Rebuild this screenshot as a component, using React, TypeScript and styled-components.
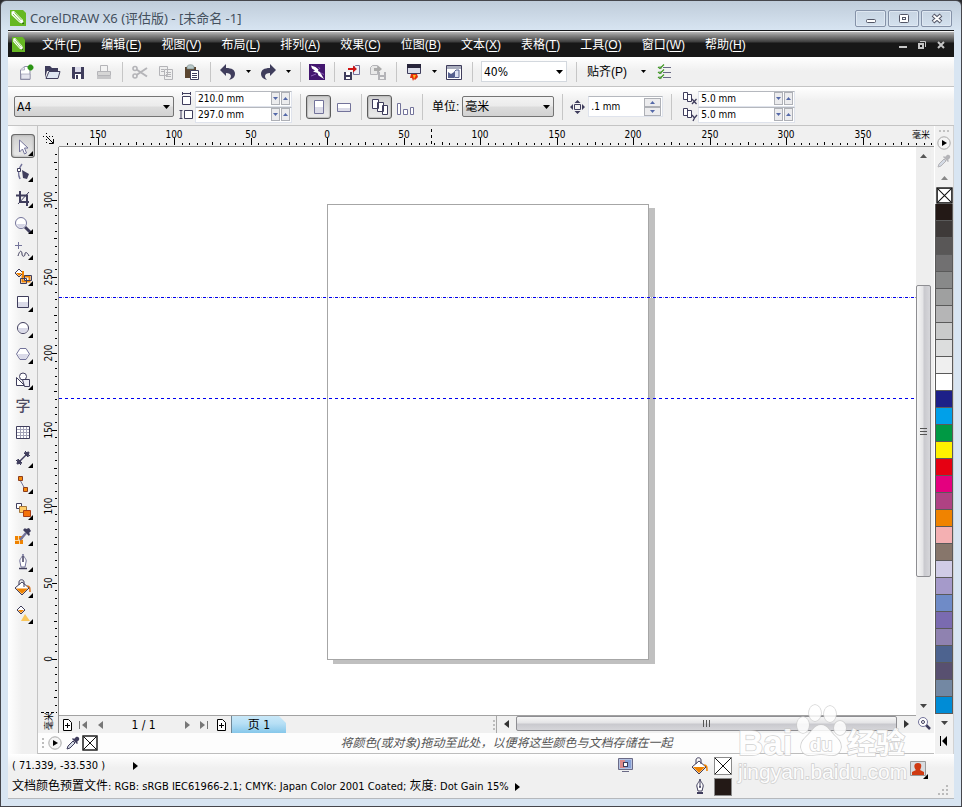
import React from "react";
import styled, { createGlobalStyle, css } from "styled-components";

const UI_FONT = `"DejaVu Sans Condensed", "Noto Sans", "Noto Sans CJK SC", sans-serif`;
const MENU_FONT = `"Liberation Sans", "Noto Sans CJK SC", sans-serif`;
const INK = "#3f3d5c";
const SOFT_INK = "#73739a";
const MUTED = "#b4b4b8";
const GREY = "#777";

const GlobalStyle = createGlobalStyle`
  *, *::before, *::after { box-sizing: border-box; }
  body { margin: 0; background: #2b2b2f; font: 11px/16px ${UI_FONT}; color: #000; }
  button, input, select { font: inherit; color: inherit; margin: 0; padding: 0; border: 0; border-radius: 0; background: none; }
  svg { display: block; flex: none; }
`;

/* ---------- window frame ---------- */

const AppWindow = styled.div`
  position: relative;
  display: flex;
  flex-direction: column;
  min-height: 100vh;
  padding: 0 7px 7px;
  border: 1px solid #45464c;
  border-radius: 6px 6px 0 0;
  background: linear-gradient(#bfccda 0, #d8e5f2 30px, #d8e5f2);
`;

const TitleBar = styled.header`
  display: flex;
  align-items: center;
  gap: 4px;
  height: 29px;
  padding: 5px 2px 0 2px;
  h1 {
    flex: 1;
    margin: 0;
    font: 13px/18px "Noto Sans", "Noto Sans CJK SC", sans-serif;
    color: #44505e;
    white-space: nowrap;
  }
`;

const WindowButtons = styled.div`
  display: flex;
  gap: 2px;
`;

const WindowButton = styled.button`
  display: grid;
  place-items: center;
  width: 31px;
  height: 17px;
  border: 1px solid #8592a8;
  border-radius: 2px;
  box-shadow: inset 0 0 0 1px #dfe8f2;
`;

const Client = styled.div`
  flex: 1;
  display: flex;
  flex-direction: column;
  border-top: 1px solid #15171a;
  border-bottom: 1px solid #b5b8bc;
  background: #f0f0f0;
`;

const MenuBar = styled.nav`
  display: flex;
  align-items: center;
  justify-content: space-between;
  height: 26px;
  padding: 0 6px 0 4px;
  border-top: 1px solid #f4f4f4;
  background: linear-gradient(#b8b8b8 0, #8c8c8c 3px, #3c3c3c 10px, #171717 11px, #171717);
  color: #fff;
  font: 12px/18px ${MENU_FONT};
`;

const Menus = styled.div`
  display: flex;
  gap: 20px;
  flex: 1;
  margin-left: 17px;
`;

const MenuButton = styled.button`
  white-space: nowrap;
  u { text-underline-offset: 2px; }
`;

const DocButtons = styled.div`
  display: flex;
  gap: 5px;
`;

const PlainButton = styled.button<{ $w?: number; $h?: number }>`
  display: grid;
  place-items: center;
  flex: none;
  width: ${(p) => p.$w ?? 14}px;
  height: ${(p) => p.$h ?? 16}px;
`;

/* ---------- bars ---------- */

const barSurface = css`
  display: flex;
  align-items: center;
  border-bottom: 1px solid #c4c4c4;
  background: linear-gradient(#fff, #f0f0f0 14px, #f0f0f0);
`;

const Toolbar = styled.div`
  ${barSurface}
  height: 30px;
  padding-left: 5px;
`;

const PropertyBar = styled.div`
  ${barSurface}
  height: 39px;
  padding: 1px 0 0 6px;
`;

const Divider = styled.span`
  flex: none;
  width: 1px;
  height: 20px;
  margin: 0 4px 0 5px;
  background: #c6c6c6;
`;

const GroupDivider = styled.span<{ $before?: number }>`
  flex: none;
  width: 1px;
  height: 26px;
  margin: 0 5px 0 ${(p) => p.$before ?? 8}px;
  background: #c6c6c6;
`;

const Gap = styled.span`
  flex: none;
  width: 5px;
`;

const TextButton = styled.button`
  padding: 0 6px;
  font: 12px/18px ${MENU_FONT};
  white-space: nowrap;
`;

const ToggleButton = styled.button<{ $on?: boolean }>`
  display: grid;
  place-items: center;
  flex: none;
  width: 25px;
  height: 24px;
  border-radius: 3px;
  ${(p) =>
    p.$on &&
    css`
      border: 1px solid #5d5d5d;
      background: linear-gradient(#cfcfcf, #ededed);
      box-shadow: inset 0 0 1px 1px #bdbdbd;
    `}
`;

const SelectBox = styled.span<{ $w: number; $flat?: boolean }>`
  display: grid;
  align-items: center;
  flex: none;
  width: ${(p) => p.$w}px;
  margin: 0 ${(p) => (p.$flat ? 4 : 0)}px;
  select {
    grid-area: 1 / 1;
    appearance: none;
    width: 100%;
    height: 21px;
    padding: 0 20px 0 2px;
    border: 1px solid ${(p) => (p.$flat ? "#d3d8de" : "#747474")};
    border-radius: ${(p) => (p.$flat ? 0 : 2)}px;
    background: ${(p) => (p.$flat ? "#fff" : "linear-gradient(#f3f3f3, #ebebeb 48%, #dcdcdc 52%, #d2d2d2)")};
    font-size: 12px;
  }
  svg {
    grid-area: 1 / 1;
    justify-self: end;
    margin-right: 4px;
    pointer-events: none;
  }
`;

const UnitLabel = styled.label`
  margin: 0 3px 0 4px;
  font: 12px/18px ${MENU_FONT};
`;

const FieldGroup = styled.div`
  display: grid;
  grid-template-columns: 16px 97px;
  grid-auto-rows: 16px;
  align-items: center;
`;

const Field = styled.span<{ $w?: number; $h?: number }>`
  display: flex;
  align-items: center;
  gap: 1px;
  width: ${(p) => p.$w ?? 97}px;
  height: ${(p) => p.$h ?? 16}px;
  padding-right: 1px;
  border: 1px solid #dfe3ec;
  border-top-color: #b5b8be;
  background: #fff;
  input {
    flex: 1;
    min-width: 0;
    padding-left: 2px;
    font-size: 10px;
    line-height: 14px;
    outline: 0;
  }
`;

const SpinButton = styled.button<{ $wide?: boolean }>`
  display: grid;
  place-items: center;
  width: ${(p) => (p.$wide ? 17 : 9)}px;
  height: ${(p) => (p.$wide ? 9 : 13)}px;
  border: 1px solid #aeb0b6;
  background: #ececee;
`;

const SpinStack = styled.span`
  display: flex;
  flex-direction: column;
`;

/* ---------- workspace ---------- */

const Workspace = styled.div`
  flex: 1;
  display: flex;
  min-height: 0;
`;

const Toolbox = styled.aside`
  width: 30px;
  padding: 8px 2px 0 3px;
  border-right: 1px solid #c3c3c3;
  background: linear-gradient(90deg, #fff, #f0f0f0 14px, #f0f0f0);
`;

const ToolItem = styled.button<{ $on?: boolean }>`
  display: block;
  width: 24px;
  height: 24px;
  margin-bottom: 2px;
  ${(p) =>
    p.$on &&
    css`
      border-radius: 4px;
      background: linear-gradient(#cdcdcd, #ececec);
      box-shadow: inset 0 0 0 1px #6a6a6a, inset 0 0 2px 2px #bcbcbc;
    `}
`;

const CenterColumn = styled.div`
  flex: 1;
  display: flex;
  flex-direction: column;
  min-width: 0;
`;

const DrawingGrid = styled.div`
  flex: 1;
  display: grid;
  grid-template-columns: 21px 1fr 18px;
  grid-template-rows: 21px 1fr 18px;
  min-height: 0;
`;

const RulerCorner = styled.div`
  display: grid;
  place-items: center;
  padding-top: 4px;
`;

const HRuler = styled.div`
  grid-column: 2 / 4;
  overflow: hidden;
  border-bottom: 1px solid #8f8f8f;
`;

const VRuler = styled.div`
  grid-row: 2 / 4;
  overflow: hidden;
  border-right: 1px solid #8f8f8f;
`;

const RulerDrawing = styled.svg`
  width: 100%;
  height: 100%;
  font-size: 10px;
  shape-rendering: crispEdges;
`;

const Canvas = styled.main`
  position: relative;
  overflow: hidden;
  background: #fff;
`;

const Page = styled.div`
  position: absolute;
  left: 268px;
  top: 57px;
  width: 322px;
  height: 456px;
  border: 1px solid #a6a6a6;
  background: #fff;
  box-shadow: 6px 4px 0 #c0c0c0;
`;

const Guide = styled.div<{ $y: number; $active?: boolean }>`
  position: absolute;
  left: 0;
  right: 0;
  top: ${(p) => p.$y}px;
  height: 1px;
  background: repeating-linear-gradient(
    90deg,
    #0000f0 0 3px,
    ${(p) => (p.$active ? "#fff 3px 4px, #9a9aae 4px 5px, #fff 5px 6px" : "transparent 3px 6px")}
  );
`;

const VScroll = styled.div`
  display: flex;
  flex-direction: column;
  align-items: center;
  width: 15px;
  background: #eeeeee;
`;

const thumb = css`
  display: grid;
  place-items: center;
  border: 1px solid #8e8e92;
  border-radius: 2px;
`;

const Track = styled.span<{ $grow: number }>`
  flex: ${(p) => p.$grow} 1 0;
`;

const VThumb = styled.button`
  ${thumb}
  flex: 73 1 0;
  width: 15px;
  background: linear-gradient(90deg, #f6f6f6, #e4e4e6 45%, #c9c9ce 55%, #d6d6da);
`;

const PageBar = styled.div`
  grid-column: 2;
  display: grid;
  grid-template-columns: 22fr 21fr;
  border-top: 1px solid #a2a2a2;
  height: 18px;
`;

const PageTabs = styled.div`
  display: flex;
  align-items: center;
  border-right: 1px solid #a8a8a8;
`;

const PageCount = styled.span`
  width: 69px;
  font-size: 12px;
  text-align: center;
`;

const PageTab = styled.button`
  width: 55px;
  height: 17px;
  margin: 0 auto 0 1px;
  border-left: 1px solid #6f8797;
  background: linear-gradient(#c9e8f8, #b6dff5 45%, #86c7ea);
  clip-path: polygon(0 0, 48px 0, 100% 7px, 100% 100%, 0 100%);
  font-size: 12px;
  line-height: 16px;
`;

const HScroll = styled.div`
  display: flex;
  align-items: flex-start;
`;

const HThumb = styled.button`
  ${thumb}
  flex: 1;
  height: 15px;
  background: linear-gradient(#f6f6f6, #e4e4e6 45%, #c9c9ce 55%, #d6d6da);
`;

const DocumentPalette = styled.div`
  display: flex;
  align-items: center;
  height: 21px;
  padding: 0 20px 0 3px;
  border-bottom: 1px solid #bdbdbd;
  background: #fdfdfd;
  em {
    flex: 1;
    color: #555;
    font: italic 12px/16px ${MENU_FONT};
    text-align: center;
    white-space: nowrap;
  }
`;

const ColorPalette = styled.aside`
  display: flex;
  flex-direction: column;
  align-items: center;
  width: 20px;
  padding-top: 3px;
  border-left: 1px solid #fff;
  border-right: 1px solid #d2d2d2;
  background: #f1f1f1;
`;

const Swatch = styled.button<{ $color: string }>`
  width: 18px;
  height: 17px;
  border: solid #5a5a5a;
  border-width: 0 1px 1px;
  background: ${(p) => p.$color};
`;

/* ---------- status bar ---------- */

const StatusBar = styled.footer`
  display: flex;
  height: 44px;
  background: linear-gradient(#fff, #f0f0f0 14px, #f0f0f0);
`;

const StatusText = styled.div`
  flex: 1;
  min-width: 0;
  padding: 1px 55px 0 4px;
`;

const StatusRow = styled.div`
  display: flex;
  align-items: center;
  height: 21px;
  gap: 6px;
  white-space: nowrap;
`;

const Han = styled.span`
  font-size: 12px;
`;

const Spacer = styled.span`
  flex: 1;
`;

const FillOutline = styled.div`
  display: grid;
  grid-template-columns: 20px 19px;
  grid-auto-rows: 21px;
  align-items: center;
  gap: 0 3px;
  width: 217px;
  padding: 1px 0 0 3px;
`;

const ColorChip = styled.span<{ $color: string }>`
  display: block;
  width: 18px;
  height: 18px;
  border: 1px solid #8b8b8b;
  background: ${(p) => p.$color};
`;

const StatusEnd = styled.div`
  display: flex;
  width: 49px;
  padding: 6px 0 0 4px;
`;

const ResizeGrip = styled.svg`
  align-self: flex-end;
  margin: 0 0 2px 8px;
`;

const Watermark = styled.svg`
  position: absolute;
  right: 49px;
  bottom: 16px;
  pointer-events: none;
  opacity: 0.85;
`;

/* ---------- drawings ---------- */

type DrawProps = { w?: number; h?: number; top?: number; children: React.ReactNode };

const Draw = ({ w = 20, h = 20, top = 0, children }: DrawProps) => (
  <svg width={w} height={h} viewBox={`0 ${top} ${w} ${h}`} fill="none" aria-hidden="true">
    {children}
  </svg>
);

const Caret = ({ color = "#000" }: { color?: string }) => (
  <Draw w={7} h={4}><path d="M0 0h7L3.500 4z" fill={color} /></Draw>
);

const CaretUp = ({ color = "#555" }: { color?: string }) => (
  <Draw w={7} h={4}><path d="M0 4h7L3.500 0z" fill={color} /></Draw>
);

const SmallDown = () => (
  <Draw w={5} h={3}><path d="M0 0h5L2.500 3z" fill="#5468a8" /></Draw>
);

const SmallUp = () => (
  <Draw w={5} h={3}><path d="M0 3h5L2.500 0z" fill="#5468a8" /></Draw>
);

const Side = ({ left = false, color = "#000" }: { left?: boolean; color?: string }) => (
  <Draw w={5} h={8}><path d={left ? "M5 0v8L0 4z" : "M0 0v8l5-4z"} fill={color} /></Draw>
);

const CorelMark = ({ w, h }: { w: number; h: number }) => (
  <svg width={w} height={h} viewBox="0 0 16 16" preserveAspectRatio="none" aria-hidden="true">
    <path d="M0 0h13l3 3v13H0z" fill="#66b822" />
    <path d="M1.500 1.500L4 1l8.500 8.500 2 5-5-2L1.500 5z" fill="#fff" />
    <path d="M3 4l7 7.500M4.500 2.500l7 7.500" stroke="#66b822" strokeWidth=".8" />
    <path d="M14.500 14.500l-3-.8 2-2z" fill="#2d6d0c" />
  </svg>
);

const NoColor = ({ size = 16 }: { size?: number }) => (
  <svg width={size} height={size} viewBox="0 0 16 16" aria-hidden="true">
    <rect x="1" y="1" width="14" height="14" fill="#fff" stroke="#111" strokeWidth="1.400" />
    <path d="M2 2l12 12M14 2L2 14" stroke="#111" />
  </svg>
);

const Dropper = ({ color = INK }: { color?: string }) => (
  <Draw w={14} h={14}>
    <path d="M1 13l1-3 5-5 2 2-5 5z" fill="#d4dae4" stroke={color} />
    <path d="M6 3l5 5 1-1-1-1 2-2c1-2-1-4-3-3L8 3 7 2z" fill={color} />
  </Draw>
);

const Flyout = () => (
  <Draw w={14} h={14}>
    <circle cx="7" cy="7" r="6.200" fill="#f4f4f4" stroke="#a8a8a8" />
    <path d="M5 4v6l5-3z" fill="#000" />
  </Draw>
);

const Bucket = () => (
  <Draw w={18} h={18}>
    <path d="M8 4l7 6-7 7-7-7z" fill="#fff" stroke={INK} />
    <path d="M2 10h12l-6 6z" fill="#ef8200" />
    <path d="M5 7V3c0-3 5-3 5 0v4" stroke={INK} />
    <path d="M13 8c3 0 3 2 3 6" stroke="#ef8200" strokeWidth="1.500" />
  </Draw>
);

const Nib = () => (
  <Draw w={18} h={18}>
    <path d="M9 1c1 4 4 5 3 8l-1 4H7L6 9C5 6 8 5 9 1z" fill="#fff" stroke={INK} />
    <path d="M9 2v7" stroke={INK} />
    <circle cx="9" cy="9" r="1" fill={INK} />
    <path d="M6 14h6v2H6z" fill={INK} />
  </Draw>
);

const toolbarIcons = {
  fresh: (
    <Draw>
      <path d="M4.500 17.500V8l4-3.500h5.500v13z" fill="#fff" stroke="#8d8da6" />
      <path d="M4.500 8h4V5M5 12h9v5H5z" fill="#e4e4ee" stroke="#8d8da6" strokeWidth=".6" />
      <path d="M14.500 2.500v6M11.500 5.500h6M12.500 3.500l4 4M16.500 3.500l-4 4" stroke="#2b9415" strokeWidth="2" />
    </Draw>
  ),
  open: (
    <Draw>
      <path d="M3 16V4h5l2 2h6v3H5z" fill={INK} />
      <path d="M4 16.500l3-7h11l-2 7z" fill="#dfe6f2" stroke={INK} />
    </Draw>
  ),
  save: (
    <Draw>
      <path d="M4 5h12v12H5l-1-1z" fill={INK} />
      <path d="M7 5h6v5H7z" fill="#dcdcea" />
      <path d="M7 12h6v5H7z" fill="#fff" />
      <path d="M8 13h2v4H8z" fill={INK} />
    </Draw>
  ),
  print: (
    <Draw>
      <path d="M6.500 10V3.500h7V10" fill="#f3f3f3" stroke={MUTED} />
      <path d="M3.500 9.500h13v4h-13z" fill="#d6d6d6" stroke={MUTED} />
      <path d="M3 14h14v3H3z" fill="#c6c6c8" />
    </Draw>
  ),
  cut: (
    <Draw>
      <circle cx="5" cy="6.500" r="2" stroke={MUTED} strokeWidth="1.600" />
      <circle cx="5" cy="14" r="2" stroke={MUTED} strokeWidth="1.600" />
      <path d="M6.500 7.500L17 14.500M6.500 13L17 6" stroke={MUTED} strokeWidth="2" />
    </Draw>
  ),
  copy: (
    <Draw>
      <path d="M3.500 4.500h8v9h-8zM8.500 7.500h8v10h-8z" fill="#efefef" stroke={MUTED} />
      <path d="M5 7.500h3M5 9.500h3M10 10.500h5M10 12.500h5M10 14.500h5" stroke={MUTED} />
    </Draw>
  ),
  paste: (
    <Draw>
      <path d="M3 5h11v11H3z" fill="#5b4630" />
      <path d="M5 5c0-3 7-3 7 0v2H5z" fill="#b9c9c9" stroke="#6e8080" strokeWidth=".6" />
      <path d="M8.500 8.500h8v9h-8z" fill="#fff" stroke={INK} />
      <path d="M10 11.500h5M10 13.500h5M10 15.500h5" stroke={INK} />
    </Draw>
  ),
  undo: (
    <Draw>
      <path d="M2 8l6-6v4c6 0 9 2 9 6 0 3-2 5-6 6 3-3 3-7-3-7v3z" fill={INK} />
    </Draw>
  ),
  redo: (
    <Draw>
      <path d="M18 8l-6-6v4c-6 0-9 2-9 6 0 3 2 5 6 6-3-3-3-7 3-7v3z" fill={INK} />
    </Draw>
  ),
  connect: (
    <Draw>
      <path d="M2 2h16v16H2z" fill="#43166f" />
      <path d="M4 3.500l4.500 1.500 3 2.500L11 9l2 1 4 7-5.500-3.500-1-2.500L6 9.500l2-1-3-2z" fill="#fff" />
      <path d="M11.500 5l1.500 2M13 10.500l4 2M4 14l5-2" stroke="#8a5cb4" />
    </Draw>
  ),
  importFile: (
    <Draw>
      <path d="M2 10h8v8H2z" fill={INK} />
      <path d="M4 10h4v3H4zM4 15h4v2H4z" fill="#fff" />
      <path d="M11.500 12.500v-7l2-2h4v9z" fill="#eef0f8" stroke={SOFT_INK} />
      <path d="M6 9V6h5V3.500L15 7l-4 3.500V8H6z" fill="#cf1313" />
    </Draw>
  ),
  exportFile: (
    <Draw>
      <path d="M2.500 12.500v-7l2-2h5v9z" fill="#e8e8e8" stroke={MUTED} />
      <path d="M10 10h8v8h-8z" fill={MUTED} />
      <path d="M12 10h4v3h-4zM12 15h4v2h-4z" fill="#efefef" />
      <path d="M6 9V6h4V3.500L14 7l-4 3.500V9z" fill="#aaa" />
    </Draw>
  ),
  launch: (
    <Draw>
      <path d="M3.500 3.500h13v8h-13z" fill="#d9dce8" stroke={INK} />
      <path d="M3 2h14v4H3z" fill="#26243a" />
      <path d="M7 12h6l1 3-3 3-1-1-1 2-1-3-2 0z" fill="#e2300d" />
      <path d="M9 13h3l-2 4z" fill="#ffbf1f" />
    </Draw>
  ),
  welcome: (
    <Draw>
      <path d="M2.500 3.500h15v14h-15z" fill="#fff" stroke={INK} />
      <path d="M3 4h14v3H3z" fill="#a9adbd" />
      <path d="M4 10l3 2 3-2v6H4z" fill="#56608f" />
      <path d="M10.500 15.500V9.500l1.500-1.500h3v7.500z" fill="#dfe4f4" stroke="#56608f" />
    </Draw>
  ),
  options: (
    <Draw>
      <path d="M9 5.500h8M9 10.500h8M9 15.500h8" stroke="#6a6a86" />
      <path d="M5 4h3v3H5zM5 9h3v3H5zM5 14h3v3H5z" fill="#bcc4bc" />
      <path d="M4 5l2 1.500L10 2.500M4 10l2 1.500 4-4M4 15l2 1.500 4-4" stroke="#3f9a22" strokeWidth="1.200" />
    </Draw>
  ),
};

const FlyoutCorner = () => <path d="M22 17v5h-5z" fill="#000" />;

const tools: { name: string; art: React.ReactNode; flyout?: boolean }[] = [
  { name: "选择", flyout: true, art: <path d="M8.500 6v12l3-3 2 5 2-1-2-5h3.500z" fill="#fff" stroke={SOFT_INK} /> },
  {
    name: "形状",
    flyout: true,
    art: (
      <>
        <path d="M11 4c-4 5-4 11-2 15" stroke={SOFT_INK} strokeWidth="1.500" />
        <path d="M6.500 8.500h3v3h-3z" fill="#fff" stroke={INK} />
        <path d="M11 10l7 4-2 5-4-1z" fill={INK} />
      </>
    ),
  },
  {
    name: "裁剪",
    flyout: true,
    art: (
      <>
        <path d="M5 9.500h11V20M9 5v11h9" stroke={INK} strokeWidth="2" />
        <path d="M7 18L18 6" stroke={INK} />
      </>
    ),
  },
  {
    name: "缩放",
    flyout: true,
    art: (
      <>
        <path d="M14 15l6 6" stroke={INK} strokeWidth="3" />
        <circle cx="10" cy="11" r="5.500" fill="#fff" stroke={SOFT_INK} />
        <path d="M6 12h8c-1 5-7 5-8 0z" fill="#d5d5e5" />
      </>
    ),
  },
  {
    name: "手绘",
    flyout: true,
    art: (
      <>
        <path d="M7.500 4v7M4 7.500h7" stroke={SOFT_INK} />
        <path d="M7 18c2-7 4-5 4-2s3 3 3 0 3-1 4 2" stroke={INK} />
      </>
    ),
  },
  {
    name: "智能填充",
    flyout: true,
    art: (
      <>
        <path d="M8 5l4 4-4 4-4-4z" fill="#fff" stroke={INK} />
        <path d="M5 9h6l-3 3z" fill="#ef8200" />
        <path d="M11.500 12.500h7v5h-7z" stroke="#ef8200" strokeWidth="2" />
        <path d="M12 7v6" stroke="#ef8200" strokeWidth="2" />
        <path d="M9.500 14.500h6v5h-6zM13.500 11.500h7v5h-7z" stroke={INK} />
      </>
    ),
  },
  {
    name: "矩形",
    flyout: true,
    art: (
      <>
        <path d="M6.500 6.500h11v11h-11z" fill="#fff" stroke={INK} />
        <path d="M7 12h10v5H7z" fill="#dadae8" />
      </>
    ),
  },
  {
    name: "椭圆形",
    flyout: true,
    art: (
      <>
        <circle cx="12" cy="12" r="5.500" fill="#fff" stroke={INK} />
        <path d="M7 12h10c0 6.500-10 6.500-10 0z" fill="#dadae8" />
      </>
    ),
  },
  {
    name: "多边形",
    flyout: true,
    art: (
      <>
        <path d="M9 6.500h6l3.500 5.500-3.500 5.500H9L5.500 12z" fill="#fff" stroke={SOFT_INK} />
        <path d="M6.500 12h11l-3 5H9.500z" fill="#dadae8" />
      </>
    ),
  },
  {
    name: "基本形状",
    flyout: true,
    art: (
      <>
        <circle cx="12" cy="8.500" r="3.500" fill="#fff" stroke={INK} />
        <path d="M5.500 9.500v8h8z" fill="#fff" stroke={INK} />
        <path d="M11.500 11.500h7v7h-5z" fill="#ececf4" stroke={INK} />
      </>
    ),
  },
  {
    name: "文本",
    art: (
      <text x="12" y="17" textAnchor="middle" fontSize="15" fontWeight="500" fill="#4e4c62" fontFamily="Noto Sans CJK SC, sans-serif">
        字
      </text>
    ),
  },
  {
    name: "表格",
    art: (
      <>
        <path d="M5.500 6.500h13v12h-13z" fill="#fff" stroke={INK} />
        <path d="M6 9.500h12M6 12.500h12M6 15.500h12M9.500 7v11M12.500 7v11M15.500 7v11" stroke="#a3a3b8" />
      </>
    ),
  },
  {
    name: "平行度量",
    flyout: true,
    art: (
      <>
        <path d="M7 17L17 7" stroke={INK} strokeWidth="1.500" />
        <path d="M5 14l5 5M14 5l5 5M6 18l1-5 4 4zM18 6l-1 5-4-4z" fill={INK} stroke={INK} />
      </>
    ),
  },
  {
    name: "直线连接器",
    flyout: true,
    art: (
      <>
        <path d="M9 8l5 9" stroke={SOFT_INK} />
        <path d="M7.500 4.500h4v4h-4zM12.500 15.500h4v4h-4z" fill="#f58a0c" stroke="#8c3d1c" />
      </>
    ),
  },
  {
    name: "调和",
    flyout: true,
    art: (
      <>
        <path d="M5.500 5.500h5v5h-5z" fill="#fff" stroke={INK} />
        <path d="M8.500 8.500h7v6h-7z" fill="#ffcf6b" stroke="#a5763b" />
        <path d="M12.500 12.500h7v6h-7z" fill="#f4720b" stroke="#a83d16" />
      </>
    ),
  },
  {
    name: "颜色滴管",
    flyout: true,
    art: (
      <>
        <path d="M4 12h8v8H4z" fill="#ef8200" />
        <path d="M7 12h1v3h4v1H9v4H8v-3H4v-1h3z" fill="#ffd9a0" />
        <path d="M9 16l6-7" stroke={SOFT_INK} strokeWidth="2.500" />
        <path d="M12 6l6 6 1-2-1-1 2-2-2-3-3 1-1-1z" fill={INK} />
      </>
    ),
  },
  {
    name: "轮廓笔",
    flyout: true,
    art: (
      <>
        <path d="M12 4c1 4 4 5 3 8l-1 5h-4l-1-5c-1-3 2-4 3-8z" fill="#fff" stroke={SOFT_INK} />
        <path d="M12 6v6M8 18.500h8" stroke={INK} strokeWidth="1.500" />
      </>
    ),
  },
  {
    name: "填充",
    flyout: true,
    art: (
      <>
        <path d="M11 6l7 6-7 7-7-7z" fill="#fff" stroke={INK} />
        <path d="M5 12.500h12L11 18z" fill="#ef8200" />
        <path d="M8 9V6c0-3 5-3 5 0v5" stroke={INK} />
        <path d="M16 10c3 0 3 2 3 6" stroke="#d9731c" strokeWidth="1.500" />
      </>
    ),
  },
  {
    name: "交互式填充",
    flyout: true,
    art: (
      <>
        <path d="M10 4l4 4-4 4-4-4z" fill="#fff" stroke={INK} />
        <path d="M7 8h6l-3 3z" fill="#ef8200" />
        <path d="M14 12l5 7h-9z" fill="#f9c65a" />
      </>
    ),
  },
];

/* ---------- rulers ---------- */

const SCALE = 1.53;
const steps = (from: number, to: number) =>
  Array.from({ length: (to - from) / 5 + 1 }, (_, i) => from + i * 5);
const tickLength = (v: number) => (v % 50 === 0 ? 7 : v % 25 === 0 ? 3 : 2);

const HorizontalRuler = () => (
  <HRuler>
    <RulerDrawing role="img" aria-label="水平标尺">
      {steps(-170, 395).map((v) => {
        const x = Math.round(268 + v * SCALE);
        const len = tickLength(v);
        return (
          <g key={v}>
            <rect x={x} y={19 - len} width="1" height={len} />
            {v % 50 === 0 && <text x={x} y="12" textAnchor="middle">{Math.abs(v)}</text>}
          </g>
        );
      })}
      <path d="M372.500 3v16" stroke="#000" strokeDasharray="3 3" />
      <text x="853" y="12" fontSize="9">毫米</text>
    </RulerDrawing>
  </HRuler>
);

const VerticalRuler = () => (
  <VRuler>
    <RulerDrawing role="img" aria-label="垂直标尺">
      {steps(-30, 330).map((v) => {
        const y = Math.round(512 - v * SCALE);
        const len = v % 50 === 0 ? 5 : tickLength(v);
        return (
          <g key={v}>
            <rect x={19 - len} y={y} width={len} height="1" />
            {v % 50 === 0 && (
              <text transform={`translate(14 ${y}) rotate(-90)`} textAnchor="middle">{v}</text>
            )}
          </g>
        );
      })}
      <path d="M3 565.500h16" stroke="#000" strokeDasharray="3 2" />
      <text transform="translate(14 583) rotate(-90)" fontSize="9">毫米</text>
    </RulerDrawing>
  </VRuler>
);

/* ---------- data ---------- */

const menus: [string, string][] = [
  ["文件", "F"], ["编辑", "E"], ["视图", "V"], ["布局", "L"], ["排列", "A"], ["效果", "C"],
  ["位图", "B"], ["文本", "X"], ["表格", "T"], ["工具", "O"], ["窗口", "W"], ["帮助", "H"],
];

const swatches = [
  "#231916", "#3e3a39", "#595757", "#717071", "#888989", "#9fa0a0", "#b5b5b6", "#c9caca", "#dcdddd", "#efefef",
  "#ffffff", "#1d2088", "#00a0e9", "#009944", "#fff100", "#e60012", "#e4007f", "#af4283", "#f08300", "#f4b0b2",
  "#87766b", "#d0cce6", "#a59aca", "#6f8bc7", "#7a6bb0", "#8f82b0", "#4d638f", "#585070", "#7388a3", "#008cd6",
];

const ToolbarButton = ({ label, icon, w = 26 }: { label: string; icon: React.ReactNode; w?: number }) => (
  <PlainButton $w={w} $h={24} aria-label={label}>{icon}</PlainButton>
);

const DropButton = ({ label, w = 14 }: { label: string; w?: number }) => (
  <PlainButton $w={w} $h={24} aria-label={label}>
    <Draw w={5} h={3}><path d="M0 0h5L2.500 3z" fill="#000" /></Draw>
  </PlainButton>
);

const NumberField = ({ label, value }: { label: string; value: string }) => (
  <Field>
    <input aria-label={label} defaultValue={value} />
    <SpinButton aria-label={`减小${label}`}><SmallDown /></SpinButton>
    <SpinButton aria-label={`增大${label}`}><SmallUp /></SpinButton>
  </Field>
);

const Duplicate = ({ axis }: { axis: "x" | "y" }) => (
  <Draw w={16} h={15}>
    <path d="M1.500 1.500h4v7h-4zM5.500 3.500h4v7h-4z" fill="#fff" stroke={INK} />
    <path
      d={axis === "x" ? "M10 8l4.500 5M14.500 8l-4.500 5" : "M10 8l2.500 3L15 8M12.500 11l-1.500 3"}
      stroke={INK}
      strokeWidth="1.300"
    />
  </Draw>
);

const AddPage = () => (
  <Draw w={11} h={13}>
    <path d="M1.500 1.500h5l3 3v8h-8z" fill="#fff" stroke="#000" />
    <path d="M5.500 5v5M3 7.500h5" stroke="#000" />
  </Draw>
);

const Grip = () => (
  <Draw w={4} h={12}>
    <path d="M1 1h2v2H1zM1 5h2v2H1zM1 9h2v2H1z" fill="#bdbdbd" />
  </Draw>
);

export default function App() {
  return (
    <>
      <GlobalStyle />
      <AppWindow>
        <TitleBar>
          <CorelMark w={16} h={16} />
          <h1>CorelDRAW X6 (评估版) - [未命名 -1]</h1>
          <WindowButtons>
            <WindowButton aria-label="最小化">
              <Draw w={12} h={11}><rect x="1.500" y="6.500" width="9" height="3" rx="1" fill="#fff" stroke="#535666" /></Draw>
            </WindowButton>
            <WindowButton aria-label="最大化">
              <Draw w={12} h={11}>
                <rect x="1.500" y="1.500" width="9" height="8" rx="1" fill="#fff" stroke="#535666" />
                <rect x="4.500" y="4.500" width="3" height="2" stroke="#535666" />
              </Draw>
            </WindowButton>
            <WindowButton aria-label="关闭">
              <Draw w={12} h={11}>
                <path d="M2 2l8 7M10 2L2 9" stroke="#535666" strokeWidth="4" />
                <path d="M2.500 2.500l7 6M9.500 2.500l-7 6" stroke="#fff" strokeWidth="1.800" />
              </Draw>
            </WindowButton>
          </WindowButtons>
        </TitleBar>

        <Client>
          <MenuBar>
            <CorelMark w={13} h={15} />
            <Menus>
              {menus.map(([label, key]) => (
                <MenuButton key={key}>{label}(<u>{key}</u>)</MenuButton>
              ))}
            </Menus>
            <DocButtons>
              <PlainButton aria-label="最小化文档">
                <Draw w={10} h={10}><path d="M1 6h8v2H1z" fill="#c6c6c6" /></Draw>
              </PlainButton>
              <PlainButton aria-label="还原文档">
                <Draw w={10} h={10}>
                  <path d="M3 1.500h5.500V7" stroke="#c6c6c6" />
                  <path d="M2 4h4v4H2z" stroke="#c6c6c6" strokeWidth="2" />
                </Draw>
              </PlainButton>
              <PlainButton aria-label="关闭文档">
                <Draw w={10} h={10}><path d="M2 2l6 6M8 2L2 8" stroke="#c6c6c6" strokeWidth="2" /></Draw>
              </PlainButton>
            </DocButtons>
          </MenuBar>

          <Toolbar>
            <ToolbarButton label="新建" icon={toolbarIcons.fresh} />
            <ToolbarButton label="打开" icon={toolbarIcons.open} />
            <ToolbarButton label="保存" icon={toolbarIcons.save} />
            <ToolbarButton label="打印" icon={toolbarIcons.print} />
            <Divider />
            <ToolbarButton label="剪切" icon={toolbarIcons.cut} />
            <ToolbarButton label="复制" icon={toolbarIcons.copy} />
            <ToolbarButton label="粘贴" icon={toolbarIcons.paste} />
            <Divider />
            <ToolbarButton label="撤消" icon={toolbarIcons.undo} />
            <DropButton label="撤消列表" />
            <ToolbarButton label="重做" icon={toolbarIcons.redo} />
            <DropButton label="重做列表" />
            <Divider />
            <ToolbarButton label="搜索内容" icon={toolbarIcons.connect} w={24} />
            <Divider />
            <ToolbarButton label="导入" icon={toolbarIcons.importFile} />
            <ToolbarButton label="导出" icon={toolbarIcons.exportFile} />
            <Divider />
            <ToolbarButton label="应用程序启动器" icon={toolbarIcons.launch} />
            <DropButton label="应用程序列表" />
            <ToolbarButton label="欢迎屏幕" icon={toolbarIcons.welcome} />
            <Divider />
            <SelectBox $w={86} $flat>
              <select aria-label="缩放级别" defaultValue="40%"><option>40%</option></select>
              <Caret />
            </SelectBox>
            <Divider />
            <TextButton>贴齐(P)</TextButton>
            <DropButton label="贴齐选项" w={20} />
            <ToolbarButton label="选项" icon={toolbarIcons.options} w={22} />
          </Toolbar>

          <PropertyBar>
            <SelectBox $w={160}>
              <select aria-label="页面大小" defaultValue="A4"><option>A4</option></select>
              <Caret />
            </SelectBox>
            <Gap />
            <FieldGroup>
              <Draw w={14} h={15}>
                <path d="M3.500 5.500h8v8h-8z" fill="#fff" stroke={INK} />
                <path d="M3 2.500h9M3.500 1v3M11.500 1v3" stroke={INK} />
              </Draw>
              <NumberField label="页面宽度" value="210.0 mm" />
              <Draw w={14} h={15}>
                <path d="M5.500 3.500h8v8h-8z" fill="#fff" stroke={INK} />
                <path d="M2 3v9M.500 3.500h3M.500 11.500h3" stroke={INK} />
              </Draw>
              <NumberField label="页面高度" value="297.0 mm" />
            </FieldGroup>
            <GroupDivider />
            <ToggleButton $on aria-label="纵向">
              <Draw w={16} h={18}>
                <path d="M3.500 2.500h9v13h-9z" fill="#fff" stroke={SOFT_INK} />
                <path d="M4 9h8v6H4z" fill="#dcdce8" />
              </Draw>
            </ToggleButton>
            <ToggleButton aria-label="横向">
              <Draw w={16} h={18}>
                <path d="M1.500 5.500h13v8h-13z" fill="#fff" stroke={SOFT_INK} />
                <path d="M2 10h12v3H2z" fill="#dcdce8" />
              </Draw>
            </ToggleButton>
            <GroupDivider $before={5} />
            <ToggleButton $on aria-label="所有页面">
              <Draw w={18} h={18}>
                <path d="M1.500 1.500h6v9h-6zM6.500 4.500h6v9h-6zM11.500 7.500h5v9h-5z" fill="#fff" stroke={INK} />
              </Draw>
            </ToggleButton>
            <ToggleButton aria-label="当前页">
              <Draw w={18} h={18}>
                <path d="M1.500 5.500h3v11h-3zM7.500 11.500h4v5h-4zM14.500 9.500h3v7h-3z" fill="#fff" stroke={SOFT_INK} />
              </Draw>
            </ToggleButton>
            <GroupDivider $before={5} />
            <UnitLabel htmlFor="units">单位:</UnitLabel>
            <SelectBox $w={92}>
              <select id="units" defaultValue="毫米"><option>毫米</option></select>
              <Caret />
            </SelectBox>
            <GroupDivider />
            <Draw w={20} h={18}>
              <path d="M6.500 6.500h6v5h-6z" stroke={INK} />
              <path d="M9.500 2l3 3h-6zM9.500 16l3-3h-6zM2 9l3-3v6zM17 9l-3-3v6z" fill={INK} />
            </Draw>
            <Field $w={75} $h={21}>
              <input aria-label="微调距离" defaultValue=".1 mm" />
              <SpinStack>
                <SpinButton $wide aria-label="增大微调距离"><SmallUp /></SpinButton>
                <SpinButton $wide aria-label="减小微调距离"><SmallDown /></SpinButton>
              </SpinStack>
            </Field>
            <GroupDivider />
            <Gap />
            <FieldGroup>
              <Duplicate axis="x" />
              <NumberField label="再制距离 X" value="5.0 mm" />
              <Duplicate axis="y" />
              <NumberField label="再制距离 Y" value="5.0 mm" />
            </FieldGroup>
          </PropertyBar>

          <Workspace>
            <Toolbox>
              {tools.map((tool, i) => (
                <ToolItem key={tool.name} $on={i === 0} aria-label={tool.name}>
                  <Draw w={24} h={24}>
                    {tool.art}
                    {tool.flyout && <FlyoutCorner />}
                  </Draw>
                </ToolItem>
              ))}
            </Toolbox>

            <CenterColumn>
              <DrawingGrid>
                <RulerCorner>
                  <Draw w={12} h={12}>
                    <path d="M3.500 0v12M0 3.500h12" stroke="#000" strokeDasharray="1 2" />
                    <path d="M4 4l6 6M10.500 6v4.500H6" stroke="#000" />
                  </Draw>
                </RulerCorner>
                <HorizontalRuler />
                <VerticalRuler />
                <Canvas>
                  <Page />
                  <Guide $y={150} $active />
                  <Guide $y={251} />
                </Canvas>
                <VScroll>
                  <PlainButton aria-label="向上滚动" $h={18}><CaretUp /></PlainButton>
                  <Track $grow={30} />
                  <VThumb aria-label="垂直滚动">
                    <Draw w={7} h={9}><path d="M0 1.500h7M0 4.500h7M0 7.500h7" stroke="#555" /></Draw>
                  </VThumb>
                  <Track $grow={30} />
                  <PlainButton aria-label="向下滚动" $h={18}><Caret color="#444" /></PlainButton>
                </VScroll>
                <PageBar>
                  <PageTabs>
                    <PlainButton $w={16} aria-label="在前面添加页"><AddPage /></PlainButton>
                    <PlainButton $w={17} aria-label="第一页">
                      <Draw w={9} h={8}><path d="M0 0h1v8H0zM8 0v8L3 4z" fill={GREY} /></Draw>
                    </PlainButton>
                    <PlainButton $w={17} aria-label="上一页"><Side left color={GREY} /></PlainButton>
                    <PageCount>1 / 1</PageCount>
                    <PlainButton $w={18} aria-label="下一页"><Side color={GREY} /></PlainButton>
                    <PlainButton $w={17} aria-label="最后一页">
                      <Draw w={9} h={8}><path d="M7 0h1v8H7zM0 0v8l5-4z" fill={GREY} /></Draw>
                    </PlainButton>
                    <PlainButton $w={17} aria-label="在后面添加页"><AddPage /></PlainButton>
                    <PageTab>页 1</PageTab>
                    <Grip />
                  </PageTabs>
                  <HScroll>
                    <PlainButton $w={19} aria-label="向左滚动"><Side left color="#333" /></PlainButton>
                    <HThumb aria-label="水平滚动">
                      <Draw w={9} h={7}><path d="M1.500 0v7M4.500 0v7M7.500 0v7" stroke="#555" /></Draw>
                    </HThumb>
                    <PlainButton $w={19} aria-label="向右滚动"><Side color="#333" /></PlainButton>
                  </HScroll>
                </PageBar>
                <PlainButton $w={15} $h={16} aria-label="导航器">
                  <Draw w={14} h={14}>
                    <path d="M9 9l4 4" stroke={INK} strokeWidth="2.500" />
                    <circle cx="6" cy="6" r="4.500" fill="#fff" stroke={SOFT_INK} />
                    <circle cx="6" cy="6" r="1.500" stroke={INK} />
                  </Draw>
                </PlainButton>
              </DrawingGrid>
              <DocumentPalette>
                <Grip />
                <PlainButton $w={20} aria-label="调色板菜单"><Flyout /></PlainButton>
                <PlainButton $w={16} aria-label="滴管"><Dropper /></PlainButton>
                <PlainButton $w={18} aria-label="无颜色"><NoColor /></PlainButton>
                <em>将颜色(或对象)拖动至此处，以便将这些颜色与文档存储在一起</em>
              </DocumentPalette>
            </CenterColumn>

            <ColorPalette>
              <Draw w={12} h={4}><path d="M1 1h2v2H1zM5 1h2v2H5zM9 1h2v2H9z" fill="#c2c2c2" /></Draw>
              <PlainButton $h={20} aria-label="调色板选项"><Flyout /></PlainButton>
              <PlainButton $h={16} aria-label="颜色滴管"><Dropper color={MUTED} /></PlainButton>
              <PlainButton $h={18} aria-label="向上"><CaretUp color="#888" /></PlainButton>
              <PlainButton $h={17} $w={18} aria-label="无色"><NoColor size={17} /></PlainButton>
              {swatches.map((color) => (
                <Swatch key={color} $color={color} aria-label={color} />
              ))}
              <PlainButton $h={18} aria-label="向下"><Caret color="#444" /></PlainButton>
              <PlainButton $h={18} aria-label="展开调色板">
                <Draw w={8} h={10}><path d="M0 0h1v10H0zM7 0v10L2 5z" fill="#000" /></Draw>
              </PlainButton>
            </ColorPalette>
          </Workspace>

          <StatusBar>
            <StatusText>
              <StatusRow>
                <span>( 71.339, -33.530 )</span>
                <Gap />
                <Gap />
                <Side />
                <Spacer />
                <Draw w={15} h={15}>
                  <path d="M.500.500h14v11H.500z" fill="#b6c3e2" stroke="#6a6a86" />
                  <path d="M2 2h5v8H2z" fill="#dc8a8a" />
                  <path d="M7 2h6v8H7z" fill="#86a0d6" />
                  <rect x="5.500" y="4.500" width="4" height="4" fill="#fff" stroke={INK} />
                  <path d="M4 13h7v1H4z" fill="#6a6a86" />
                </Draw>
              </StatusRow>
              <StatusRow>
                <span>
                  <Han>文档颜色预置文件</Han>: RGB: sRGB IEC61966-2.1; CMYK: Japan Color 2001 Coated; <Han>灰度</Han>: Dot Gain 15%
                </span>
                <Side />
              </StatusRow>
            </StatusText>
            <FillOutline>
              <Bucket />
              <ColorChip $color="#fff">
                <Draw w={16} h={16}><path d="M0 0l16 16M16 0L0 16" stroke="#111" /></Draw>
              </ColorChip>
              <Nib />
              <ColorChip $color="#231916" />
            </FillOutline>
            <StatusEnd>
              <PlainButton $w={20} $h={20} aria-label="用户">
                <Draw w={20} h={20}>
                  <path d="M1.500 1.500h15v14h-15z" fill="#d8dce0" stroke="#9a9a9a" />
                  <path d="M9 3c5 0 3 5 2 7l4 2v3H3v-3l4-2C5 8 4 3 9 3z" fill="#cf3a12" />
                  <path d="M19 14v5h-5z" fill="#000" />
                </Draw>
              </PlainButton>
              <ResizeGrip width="12" height="12" viewBox="0 0 12 12" aria-hidden="true">
                <path d="M9 1h2v2H9zM5 5h2v2H5zM9 5h2v2H9zM1 9h2v2H1zM5 9h2v2H5zM9 9h2v2H9z" fill="#bbb" />
              </ResizeGrip>
            </StatusEnd>
          </StatusBar>
        </Client>

        <Watermark width="176" height="90" viewBox="0 0 176 90" role="img" aria-label="Baidu 经验">
          <g fill="#fff" stroke="#cacaca" strokeWidth="1.500" paintOrder="stroke">
            <ellipse cx="67" cy="25" rx="6" ry="8" />
            <ellipse cx="79" cy="13" rx="6" ry="8" />
            <ellipse cx="94" cy="14" rx="6" ry="8" />
            <ellipse cx="104" cy="28" rx="6" ry="7" />
            <path d="M85 25c7 0 9 7 15 12 9 8 5 20-7 18-6-1-10-1-16 0-12 2-16-10-7-18 6-5 8-12 15-12z" />
            <g fontFamily="Liberation Sans, Noto Sans CJK SC, sans-serif">
              <text x="2" y="55" fontSize="35" fontWeight="700">Bai</text>
              <text x="85" y="51" fontSize="19" fontWeight="700" textAnchor="middle">du</text>
              <text x="111" y="54" fontSize="29" fontWeight="700" fontFamily="Noto Sans CJK SC, sans-serif">经验</text>
              <text x="2" y="79" fontSize="21">jingyan.baidu.com</text>
            </g>
          </g>
        </Watermark>
      </AppWindow>
    </>
  );
}
